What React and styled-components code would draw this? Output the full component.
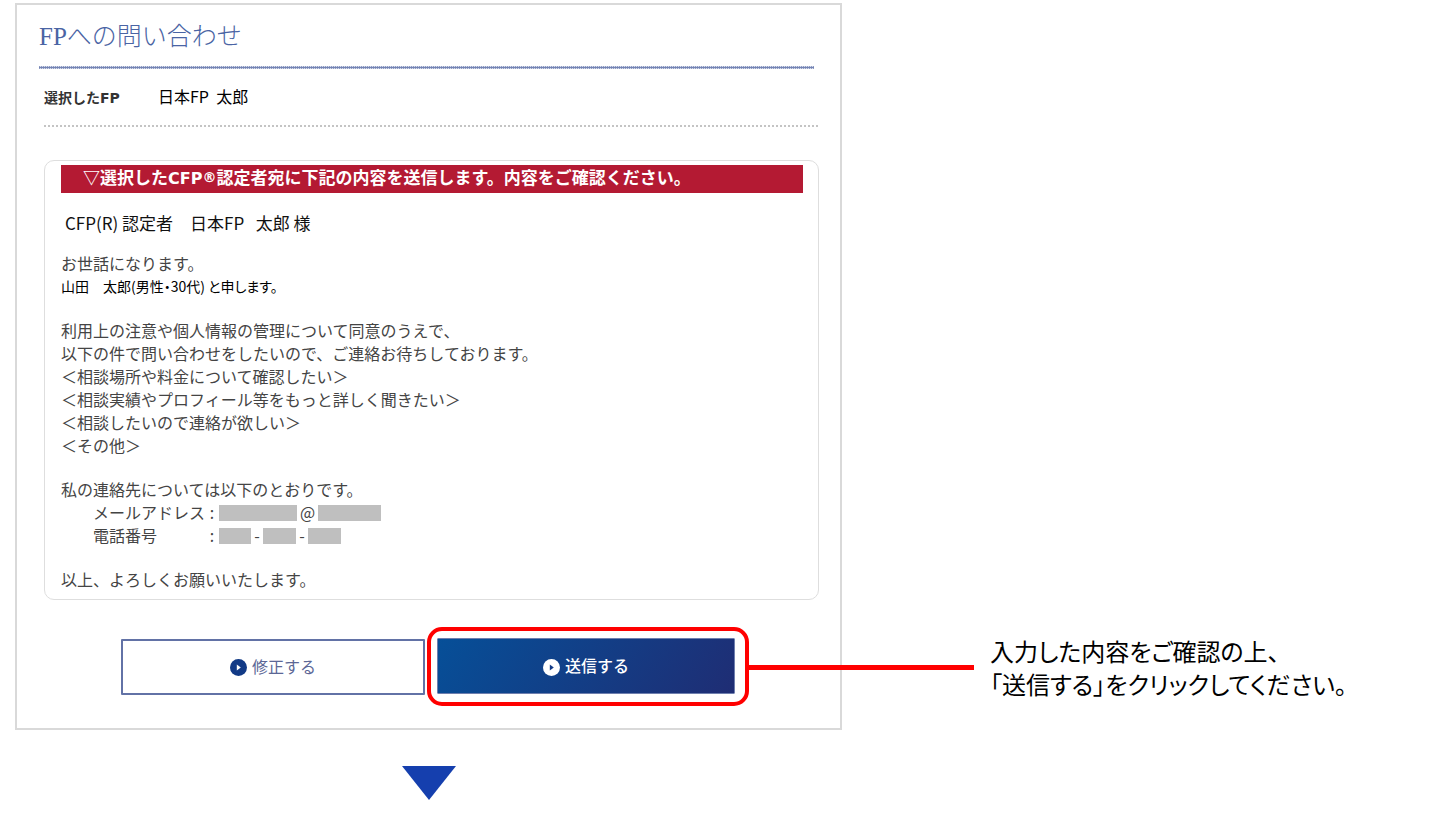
import React from "react";
import styled, { createGlobalStyle } from "styled-components";

const gothic = `"Noto Sans CJK JP", sans-serif`;

const subjects = [
  "相談場所や料金について確認したい",
  "相談実績やプロフィール等をもっと詳しく聞きたい",
  "相談したいので連絡が欲しい",
  "その他",
];

const PlayIcon = ({ circle, arrow }) => (
  <svg width="17" height="17" viewBox="0 0 17 17" aria-hidden="true">
    <circle cx="8.5" cy="8.5" r="8.5" fill={circle} />
    <path d="M6.8 5.6 L10.8 8.5 L6.8 11.4 Z" fill={arrow} />
  </svg>
);

const App = () => {
  return (
    <>
      <GlobalStyle />
      <PageS>
        <PanelS>
          <TitleS>FPへの問い合わせ</TitleS>
          <ContentS>
            <SelectedS>
              <dt>
                選択した<LatinS>FP</LatinS>
              </dt>
              <dd>日本FP&nbsp; 太郎</dd>
            </SelectedS>

            <MessageS>
              <BannerS>
                ▽選択した<LatinS>CFP</LatinS>
                <sup>®</sup>
                認定者宛に下記の内容を送信します。内容をご確認ください。
              </BannerS>
              <AddresseeS>CFP(R) 認定者　日本FP&nbsp;&nbsp; 太郎 様</AddresseeS>
              <ParagraphS>
                お世話になります。
                <SenderS>山田　太郎(男性・30代) と申します。</SenderS>
              </ParagraphS>
              <ParagraphS>
                利用上の注意や個人情報の管理について同意のうえで、
                <br />
                以下の件で問い合わせをしたいので、ご連絡お待ちしております。
                {subjects.map((subject) => (
                  <p key={subject}>＜{subject}＞</p>
                ))}
              </ParagraphS>
              <ParagraphS>
                私の連絡先については以下のとおりです。
                <ContactS>
                  <dt>メールアドレス</dt>
                  <dd>
                    <ColonS>:</ColonS>
                    <MaskS $width={78} />
                    <MarkS>@</MarkS>
                    <MaskS $width={63} />
                  </dd>
                  <dt>電話番号</dt>
                  <dd>
                    <ColonS>:</ColonS>
                    <MaskS $width={32} />
                    <HyphenS>-</HyphenS>
                    <MaskS $width={33} />
                    <HyphenS>-</HyphenS>
                    <MaskS $width={33} />
                  </dd>
                </ContactS>
              </ParagraphS>
              <ParagraphS>以上、よろしくお願いいたします。</ParagraphS>
            </MessageS>

            <ActionsS>
              <ButtonS type="button">
                <PlayIcon circle="#123a86" arrow="#ffffff" />
                修正する
              </ButtonS>
              <HighlightS>
                <ButtonS type="button" $primary>
                  <PlayIcon circle="#ffffff" arrow="#123a86" />
                  送信する
                </ButtonS>
              </HighlightS>
            </ActionsS>
          </ContentS>
        </PanelS>

        <NoteS>
          入力した内容をご確認の上、
          <br />
          「送信する」をクリックしてください。
        </NoteS>

        <NextStepS>
          <svg width="54" height="34" viewBox="0 0 54 34" aria-hidden="true">
            <path d="M0 0 H54 L27 34 Z" fill="#153fae" />
          </svg>
        </NextStepS>
      </PageS>
    </>
  );
};

export default App;

const GlobalStyle = createGlobalStyle`
  * {
    box-sizing: border-box;
  }
  body {
    margin: 0;
    background: #fff;
    color: #444;
    font-family: ${gothic};
    font-size: 16px;
    line-height: 23px;
  }
  dl, dd, p, h1, h2 {
    margin: 0;
  }
`;

const PageS = styled.main`
  display: grid;
  grid-template-columns: 827fr 603fr;
  padding: 3px 0 0 15px;
`;

const PanelS = styled.section`
  padding: 14px 21px 22px 22px;
  border: 2px solid #d9d9d9;
`;

const TitleS = styled.h1`
  position: relative;
  margin-right: 5px;
  padding-bottom: 11px;
  color: #4a64a4;
  font-family: "Liberation Serif", "Noto Sans CJK JP", serif;
  font-size: 25px;
  font-weight: 300;
  line-height: 36px;

  &::after {
    content: "";
    display: block;
    position: absolute;
    top: 100%;
    left: 0;
    right: 0;
    height: 3px;
    background:
      linear-gradient(#7484b4, #7484b4) 0 1px / 100% 1px no-repeat,
      repeating-linear-gradient(90deg, #8d9ac2 0 1px, #d5daea 1px 2px);
  }
`;

const ContentS = styled.div`
  margin-left: 5px;
`;

const LatinS = styled.span`
  font-family: "DejaVu Sans", sans-serif;
`;

const SelectedS = styled.dl`
  display: grid;
  grid-template-columns: 114px 1fr;
  align-items: baseline;
  padding: 19px 0 17px;
  background: repeating-linear-gradient(90deg, #c4c4c4 0 2px, transparent 2px 4px)
    0 100% / 100% 2px no-repeat;

  dt {
    color: #333;
    font-size: 14px;
    font-weight: 700;
  }
  dd {
    color: #000;
  }
`;

const MessageS = styled.section`
  margin-top: 33px;
  padding: 4px 15px 8px 16px;
  border: 1px solid #dedede;
  border-radius: 10px;
`;

const BannerS = styled.h2`
  height: 28px;
  padding-left: 22px;
  background: #b41a33;
  color: #fff;
  font-size: 17px;
  font-weight: 700;
  line-height: 24px;
  white-space: nowrap;

  ${LatinS} {
    font-size: 16px;
  }
  sup {
    font-family: "DejaVu Sans", sans-serif;
    font-size: 14px;
    line-height: 0;
    vertical-align: 2px;
  }
`;

const AddresseeS = styled.p`
  margin: 18px 0 -3px;
  padding-left: 4px;
  color: #111;
  font-size: 17px;
`;

const ParagraphS = styled.div`
  margin-top: 21px;
`;

const SenderS = styled.p`
  color: #000;
  font-size: 14px;
  font-feature-settings: "palt";
`;

const ContactS = styled.dl`
  display: grid;
  grid-template-columns: 112px 1fr;
  padding-left: 32px;

  dd {
    display: flex;
    align-items: center;
  }
`;

const ColonS = styled.span`
  width: 14px;
  text-align: center;
`;

const MaskS = styled.span`
  width: ${({ $width }) => $width}px;
  height: 16px;
  background: #bfbfbf;
`;

const MarkS = styled.span`
  width: 21px;
  text-align: center;
`;

const HyphenS = styled.span`
  width: 12px;
  text-align: center;
`;

const ActionsS = styled.div`
  display: grid;
  grid-template-columns: 304fr 322fr;
  align-items: center;
  gap: 2px;
  margin-top: 27px;
  padding: 0 70px 0 77px;
`;

const ButtonS = styled.button`
  display: flex;
  align-items: center;
  justify-content: center;
  gap: 5px;
  width: 100%;
  height: 56px;
  padding: 0 0 2px;
  border: ${({ $primary }) => ($primary ? "1px solid #6f7fae" : "2px solid #6272a6")};
  border-radius: 1px;
  background: ${({ $primary }) =>
    $primary ? "linear-gradient(125deg, #064f98, #1f2d74)" : "#fff"};
  color: ${({ $primary }) => ($primary ? "#fff" : "#5c6796")};
  font-family: inherit;
  font-size: 16px;
  font-weight: ${({ $primary }) => ($primary ? 500 : 400)};
  cursor: pointer;

  svg {
    margin-top: 4px;
  }
`;

const HighlightS = styled.div`
  position: relative;
  padding: 7px 10px 8px 6px;
  border: 4px solid #f00;
  border-radius: 15px;

  /* leader line to the note in the right column */
  &::after {
    content: "";
    position: absolute;
    top: 34px;
    left: 100%;
    width: 229px;
    height: 5px;
    background: #f00;
  }
`;

const NoteS = styled.p`
  align-self: end;
  margin-bottom: 30px;
  padding-left: 148px;
  color: #000;
  font-size: 24px;
  font-feature-settings: "palt";
  line-height: 33px;
`;

const NextStepS = styled.div`
  display: flex;
  justify-content: center;
  padding-top: 36px;
`;
